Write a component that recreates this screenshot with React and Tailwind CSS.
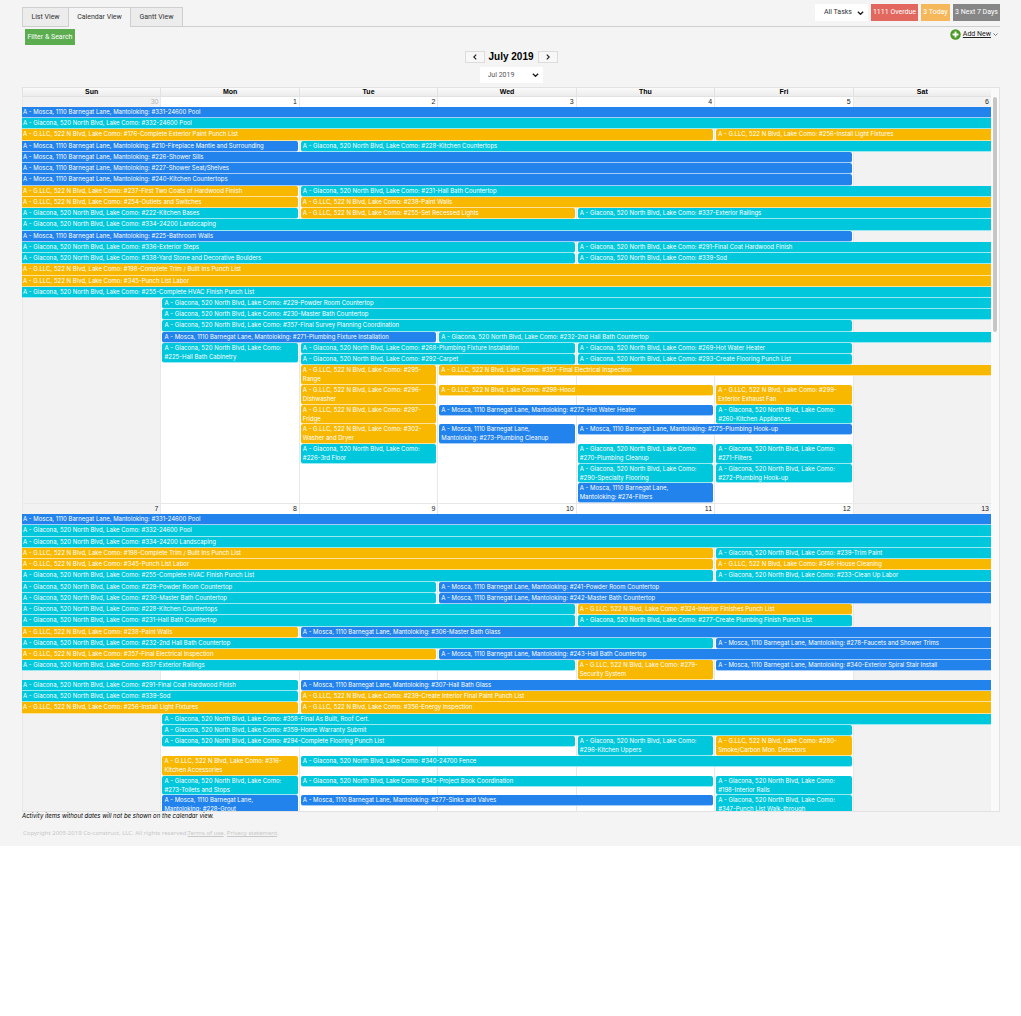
import React from "react";

const M = "A - Mosca, 1110 Barnegat Lane, Mantoloking: #";
const C = "A - Giacona, 520 North Blvd, Lake Como: #";
const G = "A - G.LLC, 522 N Blvd, Lake Como: #";

const COLORS = { [M]: "bg-[#2283ec]", [C]: "bg-[#00c8dc]", [G]: "bg-[#f8b800]" };

/* Each row: [tall?, ...events]; event: [owner, title, first day, last day, two lines?] */
const WEEK_1 = [
  [0, [M, "331-24600 Pool", 1, 7]],
  [0, [C, "332-24600 Pool", 1, 7]],
  [0, [G, "176-Complete Exterior Paint Punch List", 1, 5], [G, "256-Install Light Fixtures", 6, 7]],
  [0, [M, "210-Fireplace Mantle and Surrounding", 1, 2], [C, "228-Kitchen Countertops", 3, 7]],
  [0, [M, "226-Shower Sills", 1, 6]],
  [0, [M, "227-Shower Seat/Shelves", 1, 6]],
  [0, [M, "240-Kitchen Countertops", 1, 6]],
  [0, [G, "237-First Two Coats of Hardwood Finish", 1, 2], [C, "231-Hall Bath Countertop", 3, 7]],
  [0, [G, "254-Outlets and Switches", 1, 2], [G, "238-Paint Walls", 3, 7]],
  [0, [C, "222-Kitchen Bases", 1, 2], [G, "255-Set Recessed Lights", 3, 4], [C, "337-Exterior Railings", 5, 7]],
  [0, [C, "334-24200 Landscaping", 1, 7]],
  [0, [M, "225-Bathroom Walls", 1, 6]],
  [0, [C, "336-Exterior Steps", 1, 4], [C, "291-Final Coat Hardwood Finish", 5, 7]],
  [0, [C, "338-Yard Stone and Decorative Boulders", 1, 4], [C, "339-Sod", 5, 7]],
  [0, [G, "198-Complete Trim / Built Ins Punch List", 1, 7]],
  [0, [G, "345-Punch List Labor", 1, 7]],
  [0, [C, "255-Complete HVAC Finish Punch List", 1, 7]],
  [0, [C, "229-Powder Room Countertop", 2, 7]],
  [0, [C, "230-Master Bath Countertop", 2, 7]],
  [0, [C, "357-Final Survey Planning Coordination", 2, 6]],
  [0, [M, "271-Plumbing Fixture Installation", 2, 3], [C, "232-2nd Hall Bath Countertop", 4, 7]],
  [0, [C, "225-Hall Bath Cabinetry", 2, 2, 1], [C, "268-Plumbing Fixture Installation", 3, 4], [C, "269-Hot Water Heater", 5, 6]],
  [0, [C, "292-Carpet", 3, 4], [C, "293-Create Flooring Punch List", 5, 6]],
  [1, [G, "295-Range", 3, 3, 1], [G, "357-Final Electrical Inspection", 4, 7]],
  [1, [G, "296-Dishwasher", 3, 3, 1], [G, "298-Hood", 4, 5], [G, "299-Exterior Exhaust Fan", 6, 6, 1]],
  [1, [G, "297-Fridge", 3, 3, 1], [M, "272-Hot Water Heater", 4, 5], [C, "260-Kitchen Appliances", 6, 6, 1]],
  [1, [G, "302-Washer and Dryer", 3, 3, 1], [M, "273-Plumbing Cleanup", 4, 4, 1], [M, "275-Plumbing Hook-up", 5, 6]],
  [1, [C, "226-3rd Floor", 3, 3, 1], [C, "270-Plumbing Cleanup", 5, 5, 1], [C, "271-Filters", 6, 6, 1]],
  [1, [C, "290-Specialty Flooring", 5, 5, 1], [C, "272-Plumbing Hook-up", 6, 6, 1]],
  [1, [M, "274-Filters", 5, 5, 1]],
];

const WEEK_2 = [
  [0, [M, "331-24600 Pool", 1, 7]],
  [0, [C, "332-24600 Pool", 1, 7]],
  [0, [C, "334-24200 Landscaping", 1, 7]],
  [0, [G, "198-Complete Trim / Built Ins Punch List", 1, 5], [C, "239-Trim Paint", 6, 7]],
  [0, [G, "345-Punch List Labor", 1, 5], [G, "346-House Cleaning", 6, 7]],
  [0, [C, "255-Complete HVAC Finish Punch List", 1, 5], [C, "233-Clean Up Labor", 6, 7]],
  [0, [C, "229-Powder Room Countertop", 1, 3], [M, "241-Powder Room Countertop", 4, 7]],
  [0, [C, "230-Master Bath Countertop", 1, 3], [M, "242-Master Bath Countertop", 4, 7]],
  [0, [C, "228-Kitchen Countertops", 1, 4], [G, "324-Interior Finishes Punch List", 5, 6]],
  [0, [C, "231-Hall Bath Countertop", 1, 4], [C, "277-Create Plumbing Finish Punch List", 5, 6]],
  [0, [G, "238-Paint Walls", 1, 2], [M, "306-Master Bath Glass", 3, 7]],
  [0, [C, "232-2nd Hall Bath Countertop", 1, 5], [M, "278-Faucets and Shower Trims", 6, 7]],
  [0, [G, "357-Final Electrical Inspection", 1, 3], [M, "243-Hall Bath Countertop", 4, 7]],
  [1, [C, "337-Exterior Railings", 1, 4], [G, "279-Security System", 5, 5, 1], [M, "340-Exterior Spiral Stair Install", 6, 7]],
  [0, [C, "291-Final Coat Hardwood Finish", 1, 2], [M, "307-Hall Bath Glass", 3, 7]],
  [0, [C, "339-Sod", 1, 2], [G, "239-Create Interior Final Paint Punch List", 3, 7]],
  [0, [G, "256-Install Light Fixtures", 1, 2], [G, "356-Energy Inspection", 3, 7]],
  [0, [C, "358-Final As Built, Roof Cert.", 2, 7]],
  [0, [C, "359-Home Warranty Submit", 2, 6]],
  [1, [C, "294-Complete Flooring Punch List", 2, 4], [C, "296-Kitchen Uppers", 5, 5, 1], [G, "280-Smoke/Carbon Mon. Detectors", 6, 6, 1]],
  [1, [G, "316-Kitchen Accessories", 2, 2, 1], [C, "340-24700 Fence", 3, 6]],
  [1, [C, "273-Toilets and Stops", 2, 2, 1], [C, "345-Project Book Coordination", 3, 5], [C, "198-Interior Rails", 6, 6, 1]],
  [1, [M, "228-Grout", 2, 2, 1], [M, "277-Sinks and Valves", 3, 5], [C, "347-Punch List Walk-through", 6, 6, 1]],
];

const DAYS = ["Sun", "Mon", "Tue", "Wed", "Thu", "Fri", "Sat"];

function Event({ event, row, tall }) {
  const [owner, title, from, to, twoLines] = event;
  const edges = [
    from > 1 ? "ml-0.5 rounded-l-xs pl-0.5" : "pl-px",
    to < 7 ? "mr-px rounded-r-xs" : "",
    twoLines ? "pr-3" : "whitespace-nowrap",
    twoLines && !tall ? "h-5 self-start" : "",
    !twoLines && tall ? "h-[11px] self-start" : "",
  ].join(" ");
  const rows = twoLines && !tall ? `${row} / span 2` : row;
  return (
    <div
      className={`min-h-0 border-b border-white/60 font-[Inter,sans-serif] text-[6px] leading-[9px] text-white ${COLORS[owner]} ${edges}`}
      style={{ gridRow: rows, gridColumn: `${from} / ${to + 1}` }}
    >
      {owner}
      {title}
    </div>
  );
}

function Week({ dates, rows, muted, className }) {
  return (
    <section
      className={`grid grid-cols-7 ${className}`}
      style={{ gridTemplateRows: `10px ${rows.map((r) => (r[0] ? "minmax(0,7fr)" : "minmax(0,4fr)")).join(" ")}` }}
    >
      {dates.map((d, i) => (
        <div
          key={d}
          className={`border-l border-[#e8e8e8] ${i === 0 || i === 6 ? "bg-[#f2f2f2]" : "bg-white"}`}
          style={{ gridColumn: i + 1, gridRow: "1 / -1" }}
        />
      ))}
      {dates.map((d, i) => (
        <div
          key={d}
          className={`row-start-1 pr-0.5 text-right text-[7px] leading-[10px] ${muted === d ? "text-[#b5b5b5]" : "text-[#222]"}`}
          style={{ gridColumn: i + 1 }}
        >
          {d}
        </div>
      ))}
      {rows.map(([tall, ...events], r) =>
        events.map((e) => <Event key={e[1]} event={e} row={r + 2} tall={tall} />)
      )}
    </section>
  );
}

function Chevron({ className, d = "M1 1l4 4 4-4", box = "0 0 10 6" }) {
  return (
    <svg className={className} viewBox={box} fill="none" stroke="currentColor" strokeWidth="2" aria-hidden="true">
      <path d={d} />
    </svg>
  );
}

function Select({ label, className, chevron, text }) {
  return (
    <div className={`grid items-center bg-white ${className}`}>
      <select aria-label={label} className={`col-start-1 row-start-1 h-full w-full appearance-none bg-transparent ${text}`}>
        <option>{label}</option>
      </select>
      <Chevron className={`pointer-events-none col-start-1 row-start-1 h-1 w-[7px] justify-self-end text-[#222] ${chevron}`} />
    </div>
  );
}

export default function App() {
  return (
    <main className="bg-[#f4f4f4] pt-1 pr-[21px] pl-[22px] font-['Liberation_Sans',Arial,sans-serif] text-[#222]">
      <header className="flex h-[23px] items-end justify-between border-b border-[#cfcfcf] font-[Roboto,sans-serif]">
        <nav className="-mb-px flex text-[7px] text-[#333]">
          <button className="h-5 w-[47px] border border-[#cfcfcf] bg-[#ececec]">List View</button>
          <button className="h-5 w-[61px] border-t border-[#cfcfcf] bg-[#f4f4f4]">Calendar View</button>
          <button className="h-5 w-[53px] border border-[#cfcfcf] bg-[#ececec]">Gantt View</button>
        </nav>
        <div className="flex gap-[3px] self-start text-[7px] text-white">
          <Select label="All Tasks" className="h-[17px] w-[53px]" text="pl-[9px] text-[#333]" chevron="mr-1" />
          <button className="h-[17px] w-[47px] bg-[#e2685f] whitespace-nowrap">1111 Overdue</button>
          <button className="h-[17px] w-[29px] bg-[#f5b759] whitespace-nowrap">3 Today</button>
          <button className="h-[17px] w-[47px] bg-[#868686] whitespace-nowrap">3 Next 7 Days</button>
        </div>
      </header>

      <div className="flex items-start justify-between pt-0.5 font-[Roboto,sans-serif] text-[7px]">
        <button className="ml-[3px] h-4 w-[50px] bg-[#5bad4f] whitespace-nowrap text-white">Filter &amp; Search</button>
        <div className="flex items-center gap-0.5 pr-0.5">
          <svg className="size-[11px]" viewBox="0 0 12 12" aria-hidden="true">
            <circle cx="6" cy="6" r="5.7" fill="#4a9a24" />
            <path d="M6 2.8v6.4M2.8 6h6.4" stroke="#fff" strokeWidth="2" />
          </svg>
          <a href="#add" className="underline">Add New</a>
          <Chevron className="h-[3px] w-[5px] text-[#777]" />
        </div>
      </div>

      <div className="flex flex-col items-center pt-1.5">
        <div className="flex items-center">
          <button aria-label="Previous month" className="grid h-3 w-5 place-items-center border border-[#dcdcdc] bg-[#f7f7f7]">
            <Chevron className="h-1.5 w-1" d="M5 1L1 5l4 4" box="0 0 6 10" />
          </button>
          <h1 className="w-[53px] text-center text-[10px] leading-3 font-bold whitespace-nowrap text-black">July 2019</h1>
          <button aria-label="Next month" className="grid h-3 w-5 place-items-center border border-[#dcdcdc] bg-[#f7f7f7]">
            <Chevron className="h-1.5 w-1" d="M1 1l4 4-4 4" box="0 0 6 10" />
          </button>
        </div>
        <Select label="Jul 2019" className="mt-1 h-4 w-[63px] font-[Roboto,sans-serif] text-[7px]" text="pl-2 text-[#555]" chevron="mr-1" />
      </div>

      <div className="mt-1 border-y border-r border-[#e2e2e2] bg-[#fafafa]">
        <div className="flex">
          <div className="grid flex-1 grid-cols-7 border-b border-[#e2e2e2] bg-linear-to-b from-[#fafafa] to-[#ececec] text-center text-[7px] leading-2 font-bold text-black">
            {DAYS.map((d) => (
              <div key={d} className="border-l border-[#e2e2e2]">{d}</div>
            ))}
          </div>
          <div className="w-2" />
        </div>
        <div className="flex h-[714px] overflow-hidden">
          <div className="flex-1 overflow-y-auto [scrollbar-width:none]">
            <Week className="h-[406px]" dates={[30, 1, 2, 3, 4, 5, 6]} muted={30} rows={WEEK_1} />
            <Week className="h-[312px] border-t border-[#e8e8e8]" dates={[7, 8, 9, 10, 11, 12, 13]} rows={WEEK_2} />
          </div>
          <div className="flex w-2 justify-center">
            <div className="h-[235px] w-1 rounded-full bg-[#c6c6c6]" />
          </div>
        </div>
      </div>

      <p className="font-[Inter,sans-serif] text-[6px] leading-2 text-black italic">Activity items without dates will not be shown on the calendar view.</p>
      <footer className="px-px pt-2 pb-2 font-['Noto_Sans',sans-serif] text-[6px] leading-[10px] text-[#c8c8c8]">
        Copyright 2005-2019 Co-construct, LLC. All rights reserved.
        <a href="#terms" className="underline">Terms of use</a>. <a href="#privacy" className="underline">Privacy statement</a>.
      </footer>
    </main>
  );
}
